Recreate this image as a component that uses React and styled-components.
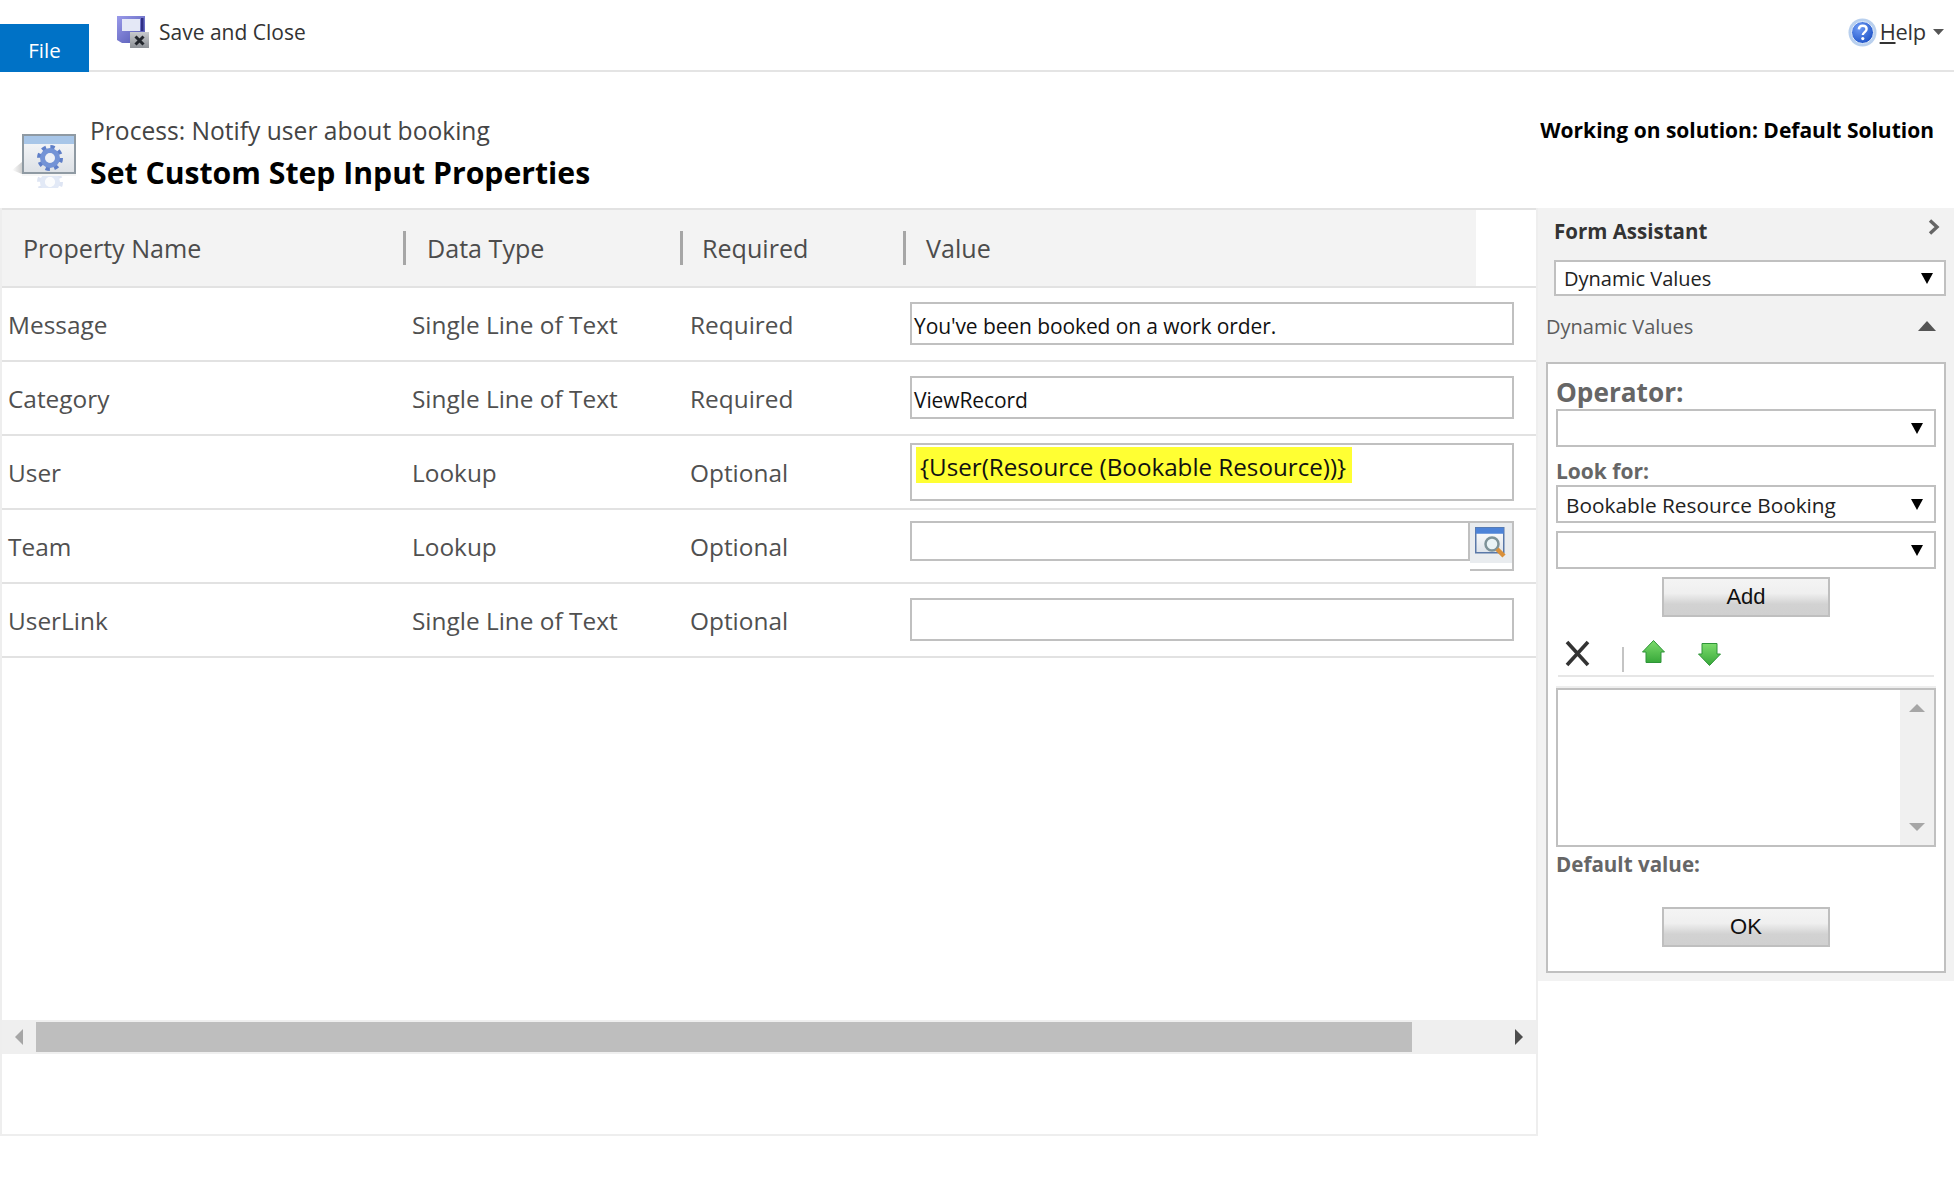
import React from 'react';
import styled, { createGlobalStyle } from 'styled-components';

const Global = createGlobalStyle`
  html, body { margin: 0; padding: 0; background: #fff; }
  body { font-family: "Open Sans", "Noto Sans", sans-serif; color: #505050; }
  * { box-sizing: border-box; }
`;

const Page = styled.div`width: 1954px; height: 1195px; overflow: hidden; background: #fff;`;

const TopBar = styled.header`
  height: 72px; display: flex; align-items: flex-start;
  border-bottom: 2px solid #e4e4e4;
`;
const FileTab = styled.div`
  width: 89px; height: 48px; margin-top: 24px; background: #0072c6; color: #fff;
  font-size: 20.5px; display: flex; align-items: center; justify-content: center; padding-top: 4px;
`;
const SaveButton = styled.div`
  display: flex; align-items: center; gap: 10px; margin: 16px 0 0 28px;
  font-size: 21px; height: 32px; color: #333;
`;
const HelpButton = styled.div`
  margin: 16px 10px 0 auto; display: flex; align-items: center; height: 32px;
  font-size: 21.8px; color: #333;
`;
const HelpLabel = styled.span`margin: -2px 7px 0 3px; letter-spacing: -0.2px;`;

const TitleBlock = styled.section`height: 136px; display: flex; padding: 38px 20px 0 12px;`;
const TitleIcon = styled.svg`width: 66px; height: 56px; margin: 22px 12px 0 0; flex: none;`;
const TitleText = styled.div`flex: 1;`;
const Process = styled.div`font-size: 24.6px; line-height: 42px; color: #444;`;
const Title = styled.h1`margin: 0; font-size: 30.2px; line-height: 42px; font-weight: 700; color: #000;`;
const Solution = styled.div`font-size: 21px; font-weight: 700; color: #000; line-height: 36px; margin-top: 2px;`;

const Main = styled.main`display: flex; align-items: flex-start;`;
const TablePane = styled.div`
  width: 1538px; height: 928px; display: flex; flex-direction: column;
  border: 2px solid #eeeeee; border-top: none;
`;
const HeaderWrap = styled.div`
  border-top: 2px solid #e2e2e2; border-bottom: 2px solid #e2e2e2;
`;
const HeaderRow = styled.div`
  display: grid; grid-template-columns: 401px 277px 223px 573px; width: 1474px; height: 76px;
  background: #f3f3f3; align-items: center;
`;
const HeadCell = styled.div`
  font-size: 25.1px; font-weight: 500; color: #4c4c4c; height: 34px; line-height: 35px;
  padding-left: ${p => p.$pad}px;
  border-left: ${p => (p.$sep ? '3px solid #a6a6a6' : 'none')};
`;
const Row = styled.div`
  display: grid; grid-template-columns: 410px 278px 220px 604px; height: 74px;
  border-bottom: 2px solid #e2e2e2; align-items: center;
  font-size: 24.4px; color: #505050;
`;
const NameCell = styled.div`padding-left: ${p => p.$pad}px;`;
const ValueCell = styled.div`align-self: start; padding-top: ${p => p.$top}px; display: flex; align-items: flex-start;`;
const Input = styled.div`
  flex: 1; height: ${p => p.$h}px; border: 2px solid #c0c0c0; background: #fff; color: #111;
  font-size: 21px; padding: ${p => p.$inset || '4px 2px'}; line-height: 36px; white-space: nowrap;
  letter-spacing: -0.1px;
`;
const Highlight = styled.span`
  display: inline-block; height: 36px; line-height: 39px; background: #ffff33; padding: 0 6px 0 4px;
  font-size: 24.2px; color: #111; letter-spacing: 0;
`;
const LookupBox = styled.div`
  width: 44px; height: 50px; border: 2px solid #c0c0c0; border-left: none; flex: none;
`;
const LookupInner = styled.div`
  height: 40px; background: #e9ecef; display: flex; justify-content: center; align-items: center;
`;
const Spacer = styled.div`flex: 1;`;
const ScrollBar = styled.div`
  height: 34px; margin-bottom: 80px; background: #efefef; display: flex; align-items: center;
`;
const ArrowCell = styled.div`
  width: ${p => p.$w}; flex: ${p => (p.$grow ? 1 : 'none')}; display: flex; padding: 0 ${p => p.$pr || 0}px 0 ${p => p.$pl || 0}px;
  justify-content: ${p => (p.$grow ? 'flex-end' : 'flex-start')};
`;
const Thumb = styled.div`width: 1376px; height: 30px; background: #bebebe; flex: none;`;

const Panel = styled.aside`width: 416px; height: 773px; background: #f2f2f2; flex: none;`;
const PanelHead = styled.div`
  height: 46px; display: flex; justify-content: space-between; padding: 0 14px 0 16px; align-items: center;
`;
const PanelTitle = styled.div`font-size: 20.5px; font-weight: 700; color: #333;`;
const Chevron = styled.svg`width: 12px; height: 16px; margin-top: -8px;`;
const Select = styled.div`
  height: ${p => p.$h}px; width: ${p => p.$w}px; margin: ${p => p.$m || 0};
  border: 2px solid #c0c0c0; background: #fff; display: flex; align-items: center; justify-content: space-between;
  padding: 0 11px 0 ${p => p.$pl || 8}px; font-size: ${p => p.$fs || 20.8}px; color: #222;
`;
const SelectText = styled.span`padding-top: 1px;`;
const SectionRow = styled.div`
  height: 66px; display: flex; justify-content: space-between; align-items: center; padding: 0 18px 6px 8px;
  font-size: 20px; color: #5c5c5c;
`;
const Box = styled.div`
  width: 400px; height: 611px; margin-left: 8px; border: 2px solid #c0c0c0; background: #fff; padding: 0 8px;
  display: flex; flex-direction: column;
`;
const BigLabel = styled.div`font-size: 26.2px; font-weight: 700; color: #666; line-height: 35px; padding-top: 11px; margin-bottom: -1px;`;
const Label = styled.div`font-size: ${p => p.$fs}px; font-weight: 700; color: #666; line-height: ${p => p.$lh}px; padding-top: ${p => p.$pt}px;`;
const Button = styled.div`
  width: 168px; height: 40px; margin: ${p => p.$m}; flex: none; align-self: flex-start;
  border: 2px solid #bfbfbf; background: linear-gradient(#f4f4f4 0%, #efefef 40%, #d2d2d2 70%, #d0d0d0 100%);
  display: flex; align-items: center; justify-content: center; font-family: "Liberation Sans", sans-serif;
  font-size: 22px; color: #111;
`;
const Toolbar = styled.div`
  height: 60px; margin: 0 2px; border-bottom: 2px solid #e6e6e6; display: flex; align-items: flex-start; flex: none;
`;
const ToolIcon = styled.svg`
  margin: ${p => p.$top}px 0 0 ${p => p.$left}px; flex: none;
`;
const ToolSep = styled.div`width: 2px; height: 25px; background: #c4c4c4; margin: 30px 0 0 32px;`;
const ListBox = styled.div`
  height: 159px; margin-top: 11px; border: 2px solid #c0c0c0; display: flex; justify-content: flex-end; flex: none;
  box-shadow: 0 -2px 0 #eeeeee;
`;
const ListScroll = styled.div`
  width: 34px; background: #f0f0f0; display: flex; flex-direction: column; justify-content: space-between; align-items: center;
  padding: 14px 0;
`;

const Tri = ({ dir = 'down', w = 12, h = 11, color = '#000' }) => {
  const pts = {
    down: `0,0 ${w},0 ${w / 2},${h}`,
    up: `0,${h} ${w},${h} ${w / 2},0`,
    left: `${w},0 ${w},${h} 0,${h / 2}`,
    right: `0,0 0,${h} ${w},${h / 2}`,
  }[dir];
  return <svg width={w} height={h} viewBox={`0 0 ${w} ${h}`} style={{ display: 'block', flex: 'none' }}><polygon points={pts} fill={color} /></svg>;
};

const SaveIcon = () => (
  <svg width="32" height="32" viewBox="0 0 32 32">
    <defs>
      <linearGradient id="fl" x1="0" y1="0" x2="1" y2="1"><stop offset="0" stopColor="#9a9aea" /><stop offset="1" stopColor="#4f55b0" /></linearGradient>
      <linearGradient id="fx" x1="0" y1="0" x2="0" y2="1"><stop offset="0" stopColor="#c8cacd" /><stop offset="1" stopColor="#8c9095" /></linearGradient>
    </defs>
    <path d="M0 0H28V27H5L0 24Z" fill="url(#fl)" />
    <rect x="5" y="3" width="18" height="12" fill="#e4e8f6" />
    <rect x="24" y="2" width="2.5" height="13" fill="#2f2f86" />
    <rect x="13" y="16" width="19" height="16" fill="url(#fx)" />
    <path d="M18.5 20.5L26.5 28.5M26.5 20.5L18.5 28.5" stroke="#22262c" strokeWidth="3" />
  </svg>
);

const HelpIcon = () => (
  <svg width="29" height="29" viewBox="0 0 29 29">
    <defs>
      <radialGradient id="hb" cx="0.35" cy="0.3" r="0.8"><stop offset="0" stopColor="#6f9cf5" /><stop offset="1" stopColor="#1a4fc4" /></radialGradient>
    </defs>
    <circle cx="14.5" cy="14.5" r="14" fill="#b9d0ee" />
    <circle cx="14.5" cy="14.5" r="11" fill="url(#hb)" stroke="#e8f1fb" strokeWidth="1" />
    <path d="M10.8 11.4C11 8.8 13 7.8 14.8 7.8C17 7.8 18.6 9.2 18.6 11.1C18.6 14 14.8 14.2 14.8 17" fill="none" stroke="#fff" strokeWidth="2.4" />
    <circle cx="14.8" cy="20.6" r="1.6" fill="#fff" />
  </svg>
);

const Gear = ({ cx, cy, opacity = 1 }) => (
  <g opacity={opacity}>
    <circle cx={cx} cy={cy} r="10.5" fill="none" stroke="#5f7fc8" strokeWidth="5" strokeDasharray="4.1 4.15" />
    <circle cx={cx} cy={cy} r="7.5" fill="none" stroke="#7393d6" strokeWidth="5" />
    <circle cx={cx} cy={cy} r="4.5" fill="#eef1f7" />
  </g>
);

const ProcessIcon = () => (
  <TitleIcon viewBox="0 0 66 56">
    <defs>
      <linearGradient id="pg" x1="0" y1="0" x2="0" y2="1"><stop offset="0" stopColor="#f8f9fb" /><stop offset="1" stopColor="#dde1e6" /></linearGradient>
      <linearGradient id="ps" x1="1" y1="0" x2="0" y2="0"><stop offset="0" stopColor="#d0d0d0" /><stop offset="1" stopColor="#ffffff" /></linearGradient>
    </defs>
    <path d="M0 38L10 30V42Z" fill="url(#ps)" />
    <Gear cx={38} cy={50} opacity={0.2} />
    <rect x="10" y="2" width="54" height="40" fill="#8f9aa3" />
    <rect x="12" y="4" width="50" height="36" fill="url(#pg)" />
    <rect x="12" y="4" width="50" height="8" fill="#a8c6e8" />
    <Gear cx={38} cy={26} />
    <rect x="10" y="42" width="54" height="2" fill="#f6f6f6" />
  </TitleIcon>
);

const LookupIcon = () => (
  <svg width="32" height="32" viewBox="0 0 32 32">
    <defs>
      <linearGradient id="lk" x1="0" y1="0" x2="0" y2="1"><stop offset="0" stopColor="#ffffff" /><stop offset="1" stopColor="#dde3ea" /></linearGradient>
    </defs>
    <rect x="0.75" y="0.75" width="28" height="25" fill="url(#lk)" stroke="#5a78a8" strokeWidth="1.5" />
    <rect x="0.75" y="0.75" width="28" height="6" fill="#4d83d8" />
    <circle cx="17" cy="17" r="6.5" fill="#e9f3f6" stroke="#7d9298" strokeWidth="2.5" />
    <path d="M22 22L29 29" stroke="#d9903a" strokeWidth="4.5" />
  </svg>
);

const GreenArrow = ({ down }) => (
  <ToolIcon $top={down ? 26 : 23} $left={down ? 33 : 18} width="23" height="23" viewBox="0 0 23 23">
    <defs>
      <linearGradient id={down ? 'gd' : 'gu'} x1="0" y1="0" x2="0" y2="1"><stop offset="0" stopColor="#7cdc6c" /><stop offset="1" stopColor="#38a83a" /></linearGradient>
    </defs>
    <path
      d={down ? 'M4 0.5H19V11H22.5L11.5 22.5L0.5 11H4Z' : 'M11.5 0.5L22.5 12H19V22.5H4V12H0.5Z'}
      fill={`url(#${down ? 'gd' : 'gu'})`} stroke="#2e9438" strokeWidth="1"
    />
  </ToolIcon>
);

const rows = [
  { n: 'Message', t: 'Single Line of Text', r: 'Required', top: 14, h: 43, v: "You've been booked on a work order." },
  { n: 'Category', t: 'Single Line of Text', r: 'Required', top: 14, h: 43, v: 'ViewRecord' },
  { n: 'User', t: 'Lookup', r: 'Optional', top: 7, h: 58, hl: '{User(Resource (Bookable Resource))}' },
  { n: 'Team', t: 'Lookup', r: 'Optional', top: 11, h: 40, lookup: true },
  { n: 'UserLink', t: 'Single Line of Text', r: 'Optional', top: 14, h: 43 },
];

export default function App() {
  return (
    <Page>
      <Global />
      <TopBar>
        <FileTab>File</FileTab>
        <SaveButton><SaveIcon />Save and Close</SaveButton>
        <HelpButton>
          <HelpIcon />
          <HelpLabel><u>H</u>elp</HelpLabel>
          <Tri w={11} h={6} color="#555" />
        </HelpButton>
      </TopBar>
      <TitleBlock>
        <ProcessIcon />
        <TitleText>
          <Process>Process: Notify user about booking</Process>
          <Title>Set Custom Step Input Properties</Title>
        </TitleText>
        <Solution>Working on solution: Default Solution</Solution>
      </TitleBlock>
      <Main>
        <TablePane>
          <HeaderWrap>
            <HeaderRow>
              <HeadCell $pad={21}>Property Name</HeadCell>
              <HeadCell $pad={21} $sep>Data Type</HeadCell>
              <HeadCell $pad={19} $sep>Required</HeadCell>
              <HeadCell $pad={20} $sep>Value</HeadCell>
            </HeaderRow>
          </HeaderWrap>
          {rows.map(r => (
            <Row key={r.n}>
              <NameCell $pad={6}>{r.n}</NameCell>
              <NameCell $pad={0}>{r.t}</NameCell>
              <NameCell $pad={0}>{r.r}</NameCell>
              <ValueCell $top={r.top}>
                <Input $h={r.h} $inset={r.hl ? '2px 4px' : undefined}>
                  {r.hl ? <Highlight>{r.hl}</Highlight> : r.v}
                </Input>
                {r.lookup && (
                  <LookupBox><LookupInner><LookupIcon /></LookupInner></LookupBox>
                )}
              </ValueCell>
            </Row>
          ))}
          <Spacer />
          <ScrollBar>
            <ArrowCell $w="34px" $pl={13}><Tri dir="left" w={8} h={16} color="#a6a6a6" /></ArrowCell>
            <Thumb />
            <ArrowCell $grow $pr={13}><Tri dir="right" w={8} h={16} color="#4d4d4d" /></ArrowCell>
          </ScrollBar>
        </TablePane>
        <Panel>
          <PanelHead>
            <PanelTitle>Form Assistant</PanelTitle>
            <Chevron viewBox="0 0 12 16"><path d="M2 1.5L9 8L2 14.5" fill="none" stroke="#666" strokeWidth="3.4" /></Chevron>
          </PanelHead>
          <Select $h={36} $w={392} $m="6px 0 0 16px" $fs={20}><SelectText>Dynamic Values</SelectText><Tri /></Select>
          <SectionRow>Dynamic Values<Tri dir="up" w={18} h={10} color="#555" /></SectionRow>
          <Box>
            <BigLabel>Operator:</BigLabel>
            <Select $h={38} $w={380}><span /><Tri /></Select>
            <Label $fs={21} $lh={28} $pt={10}>Look for:</Label>
            <Select $h={38} $w={380}><SelectText>Bookable Resource Booking</SelectText><Tri /></Select>
            <Select $h={38} $w={380} $m="8px 0 0"><span /><Tri /></Select>
            <Button $m="8px 0 0 106px">Add</Button>
            <Toolbar>
              <ToolIcon $top={23} $left={7} width="25" height="27" viewBox="0 0 25 27">
                <path d="M2 2L23 25M23 2L2 25" stroke="#333" strokeWidth="3.6" />
              </ToolIcon>
              <ToolSep />
              <GreenArrow />
              <GreenArrow down />
            </Toolbar>
            <ListBox>
              <ListScroll>
                <Tri dir="up" w={16} h={8} color="#a6a6a6" />
                <Tri dir="down" w={16} h={8} color="#a6a6a6" />
              </ListScroll>
            </ListBox>
            <Label $fs={20.6} $lh={34} $pt={0}>Default value:</Label>
            <Button $m="26px 0 0 106px">OK</Button>
          </Box>
        </Panel>
      </Main>
    </Page>
  );
}
